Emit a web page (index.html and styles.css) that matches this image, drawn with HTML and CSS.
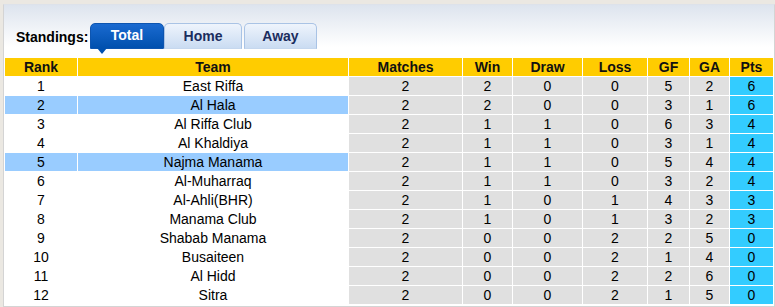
FILE: index.html
```html
<!DOCTYPE html>
<html>
<head>
<meta charset="utf-8">
<link rel="stylesheet" href="styles.css">
</head>
<body>
<div class="panel">
  <div class="tabs">
    <span class="label">Standings:</span>
    <span class="tab tab-active tab-total">Total</span>
    <span class="tab tab-home">Home</span>
    <span class="tab tab-away">Away</span>
  </div>
  <table class="standings">
    <colgroup>
      <col class="c-rank"><col class="c-team"><col class="c-m"><col class="c-w"><col class="c-d"><col class="c-l"><col class="c-gf"><col class="c-ga"><col class="c-pts">
    </colgroup>
    <thead>
      <tr><th>Rank</th><th>Team</th><th>Matches</th><th>Win</th><th>Draw</th><th>Loss</th><th>GF</th><th>GA</th><th>Pts</th></tr>
    </thead>
    <tbody>
      <tr><td>1</td><td>East Riffa</td><td class="s">2</td><td class="s">2</td><td class="s">0</td><td class="s">0</td><td class="s">5</td><td class="s">2</td><td class="p">6</td></tr>
      <tr class="hl"><td>2</td><td>Al Hala</td><td class="s">2</td><td class="s">2</td><td class="s">0</td><td class="s">0</td><td class="s">3</td><td class="s">1</td><td class="p">6</td></tr>
      <tr><td>3</td><td>Al Riffa Club</td><td class="s">2</td><td class="s">1</td><td class="s">1</td><td class="s">0</td><td class="s">6</td><td class="s">3</td><td class="p">4</td></tr>
      <tr><td>4</td><td>Al Khaldiya</td><td class="s">2</td><td class="s">1</td><td class="s">1</td><td class="s">0</td><td class="s">3</td><td class="s">1</td><td class="p">4</td></tr>
      <tr class="hl"><td>5</td><td>Najma Manama</td><td class="s">2</td><td class="s">1</td><td class="s">1</td><td class="s">0</td><td class="s">5</td><td class="s">4</td><td class="p">4</td></tr>
      <tr><td>6</td><td>Al-Muharraq</td><td class="s">2</td><td class="s">1</td><td class="s">1</td><td class="s">0</td><td class="s">3</td><td class="s">2</td><td class="p">4</td></tr>
      <tr><td>7</td><td>Al-Ahli(BHR)</td><td class="s">2</td><td class="s">1</td><td class="s">0</td><td class="s">1</td><td class="s">4</td><td class="s">3</td><td class="p">3</td></tr>
      <tr><td>8</td><td>Manama Club</td><td class="s">2</td><td class="s">1</td><td class="s">0</td><td class="s">1</td><td class="s">3</td><td class="s">2</td><td class="p">3</td></tr>
      <tr><td>9</td><td>Shabab Manama</td><td class="s">2</td><td class="s">0</td><td class="s">0</td><td class="s">2</td><td class="s">2</td><td class="s">5</td><td class="p">0</td></tr>
      <tr><td>10</td><td>Busaiteen</td><td class="s">2</td><td class="s">0</td><td class="s">0</td><td class="s">2</td><td class="s">1</td><td class="s">4</td><td class="p">0</td></tr>
      <tr><td>11</td><td>Al Hidd</td><td class="s">2</td><td class="s">0</td><td class="s">0</td><td class="s">2</td><td class="s">2</td><td class="s">6</td><td class="p">0</td></tr>
      <tr><td>12</td><td>Sitra</td><td class="s">2</td><td class="s">0</td><td class="s">0</td><td class="s">2</td><td class="s">1</td><td class="s">5</td><td class="p">0</td></tr>
    </tbody>
  </table>
</div>
</body>
</html>
```

FILE: styles.css
```css
html, body {
  margin: 0;
  padding: 0;
}
body {
  background: #ebe8e2;
  font-family: "Liberation Sans", Arial, sans-serif;
  font-size: 14px;
  color: #000;
  width: 775px;
  height: 307px;
  overflow: hidden;
}
.panel {
  margin: 4px 0 0 3px;
  width: 770px;
  height: 301px;
  border: 1px solid #d4d4d4;
  border-top-color: #dde2ea;
  background: linear-gradient(#dde4ee 0px, #ffffff 42px);
  background-color: #fff;
}
.tabs {
  display: flex;
  align-items: flex-end;
  height: 26px;
  margin-top: 18px;
  padding-left: 12px;
}
.label {
  font-weight: bold;
  font-size: 14px;
  width: 74px;
  line-height: 16px;
  padding-bottom: 4px;
}
.tab {
  position: relative;
  box-sizing: border-box;
  height: 26px;
  line-height: 24px;
  text-align: center;
  font-weight: bold;
  font-size: 14px;
  border-radius: 5px 5px 0 0;
}
.tab-total {
  width: 74px;
  color: #fff;
  background: linear-gradient(#1a6ad0, #0050ae);
  border: 1px solid #0d55b0;
  line-height: 23px;
}
.tab-total::after {
  content: "";
  position: absolute;
  left: 6px;
  bottom: -6px;
  border-left: 5px solid transparent;
  border-right: 5px solid transparent;
  border-top: 6px solid #0050ae;
}
.tab-home {
  width: 78px;
  margin-right: 2px;
}
.tab-away {
  width: 73px;
}
.tab-home, .tab-away {
  color: #1b2d5e;
  background: linear-gradient(#eef4fc, #cadcf2);
  border: 1px solid #a9c3e5;
  border-bottom-color: #c5d7ee;
}
.standings {
  margin-top: 8px;
  border-collapse: separate;
  border-spacing: 1px;
  table-layout: fixed;
  width: 770px;
}
.c-rank { width: 72px; }
.c-team { width: 270px; }
.c-m { width: 113px; }
.c-w { width: 49px; }
.c-d { width: 69px; }
.c-l { width: 64px; }
.c-gf { width: 41px; }
.c-ga { width: 39px; }
.c-pts { width: 43px; }
.standings th, .standings td {
  padding: 0;
  height: 18px;
  line-height: 18px;
  text-align: center;
  white-space: nowrap;
  overflow: hidden;
}
.standings th {
  background: #ffcc00;
  font-weight: bold;
  color: #111;
}
.standings td {
  background: #fff;
}
.standings tr.hl td {
  background: #99ccff;
}
.standings td.s, .standings tr.hl td.s {
  background: #e0e0e0;
}
.standings td.p, .standings tr.hl td.p {
  background: #33ccff;
}
```
